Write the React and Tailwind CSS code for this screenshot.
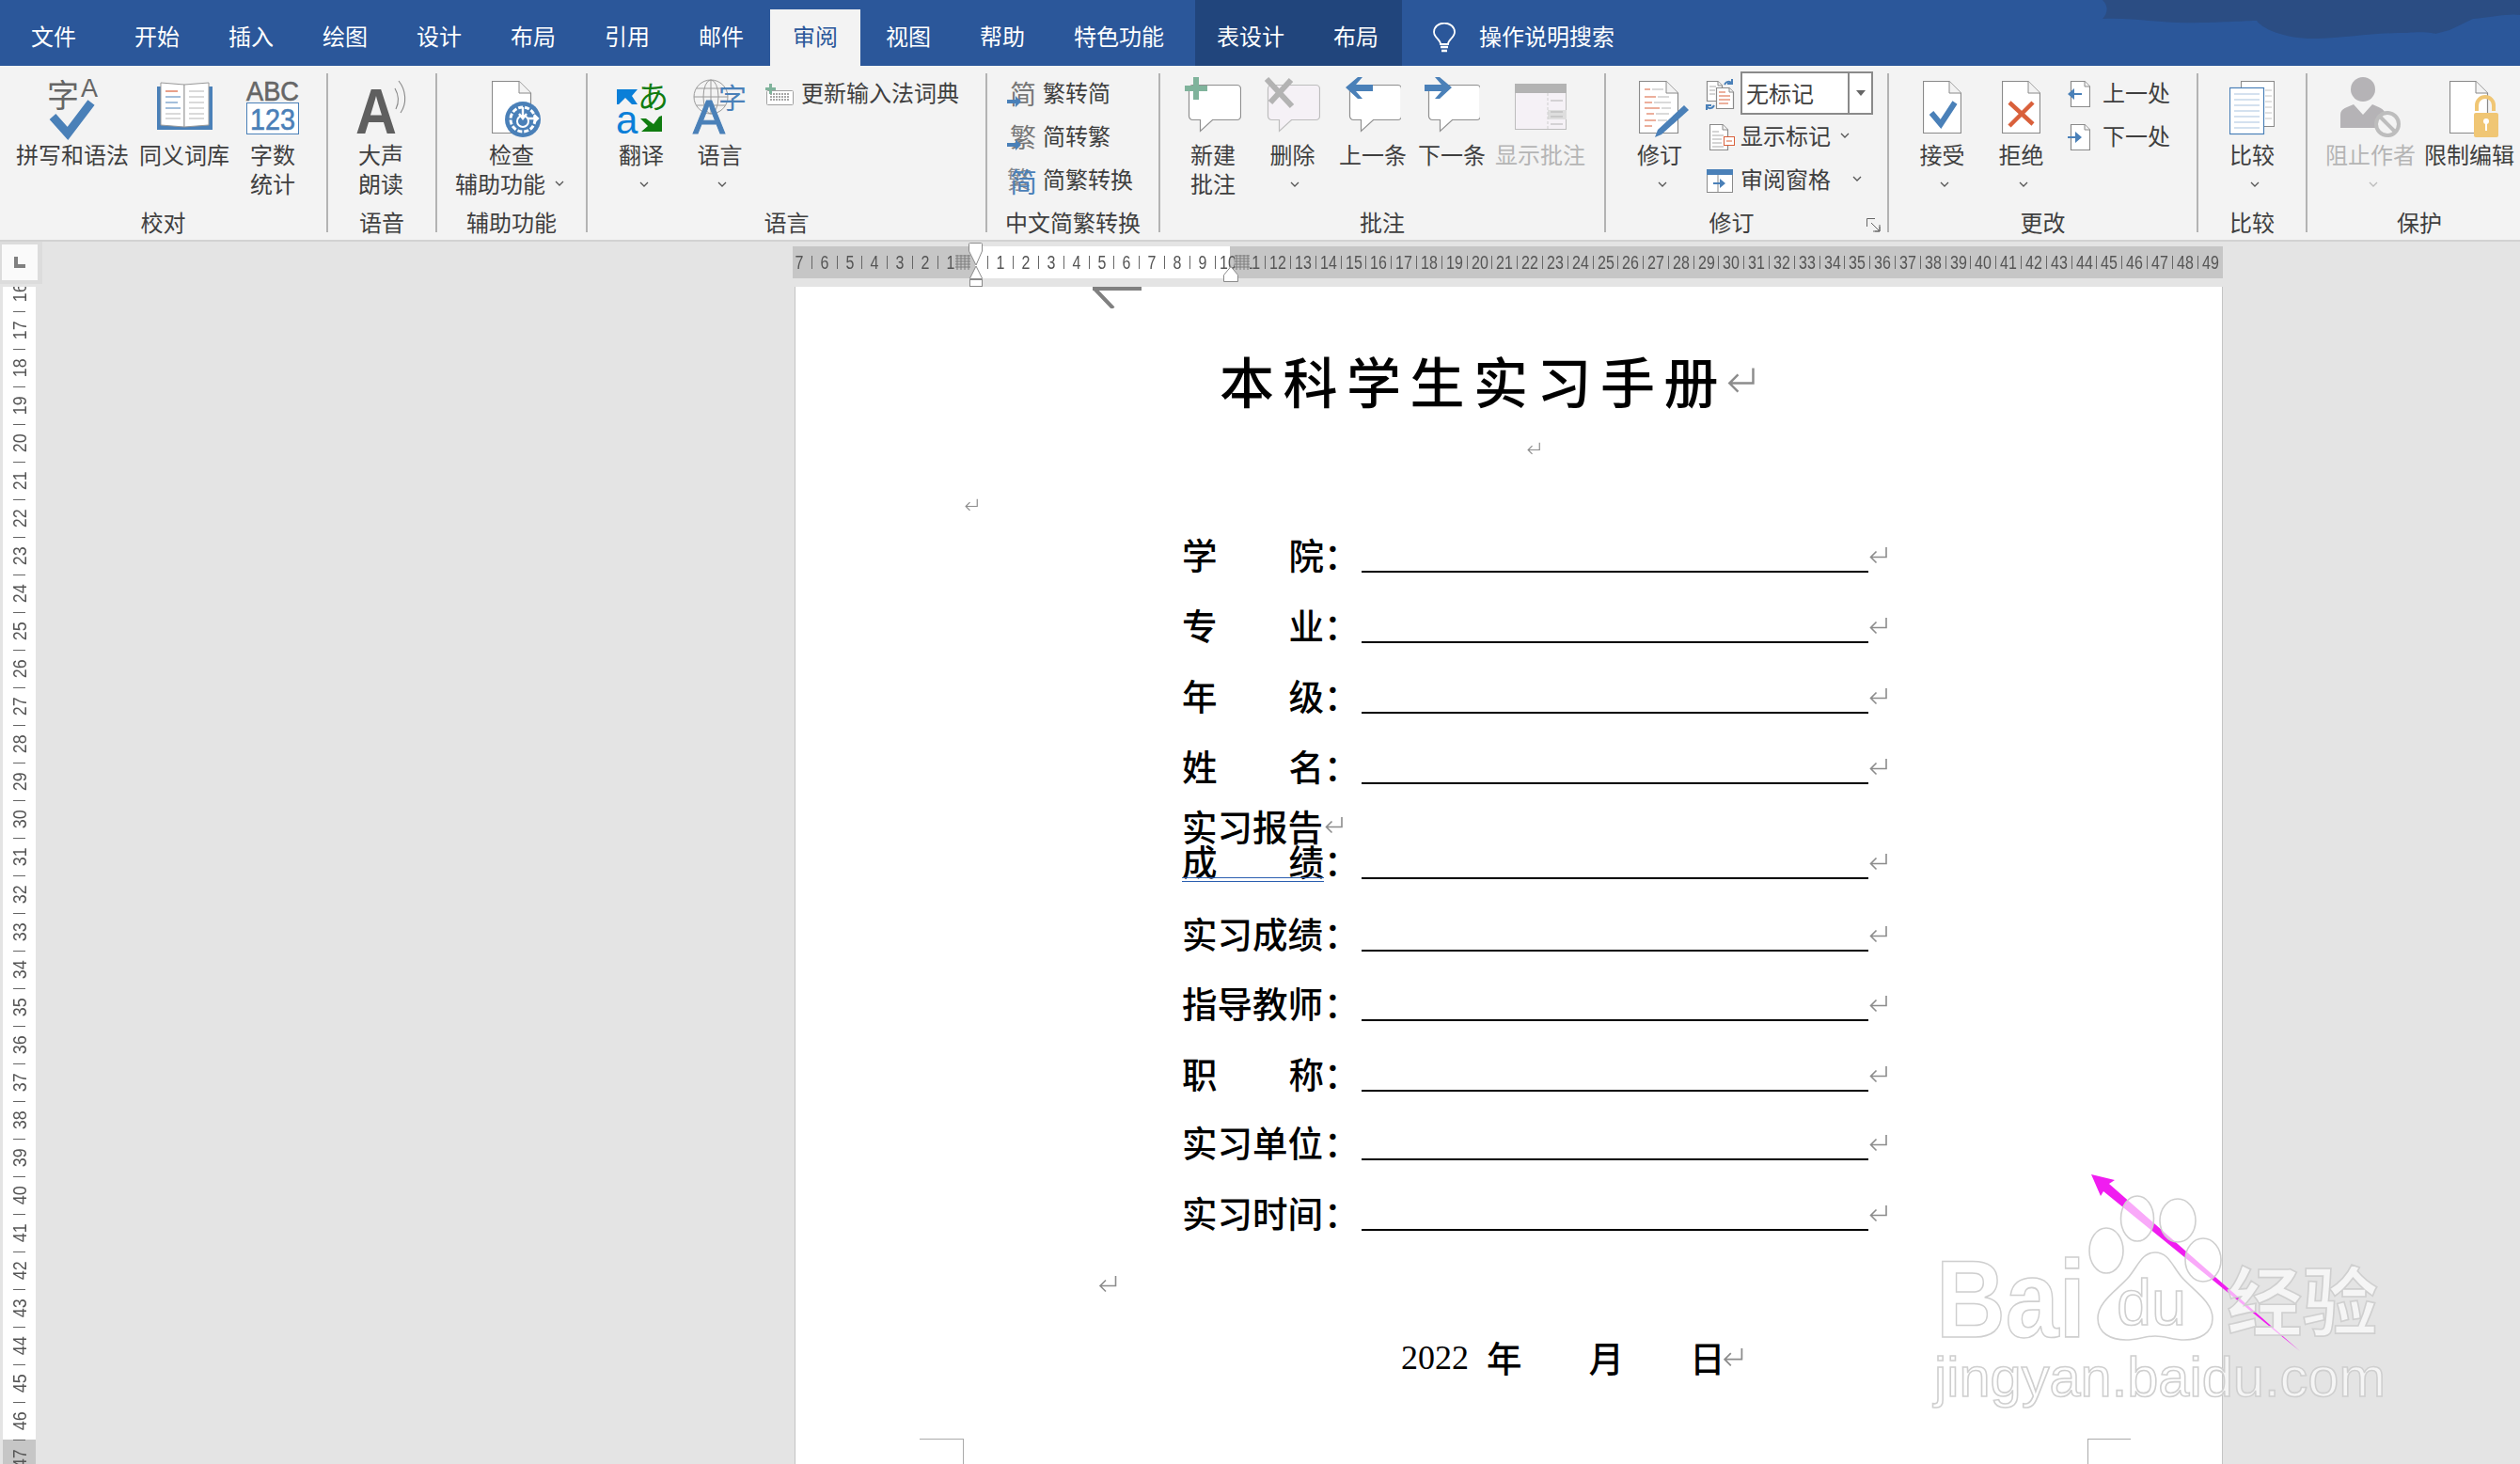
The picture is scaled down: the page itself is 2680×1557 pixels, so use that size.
const BLUE = '#4a80b8';

function Chevron({ className = '', color = '#555' }) {
  return (
    <svg width="10" height="6" viewBox="0 0 10 6" className={className}>
      <path d="M1 1l4 4 4-4" fill="none" stroke={color} strokeWidth="1.3" />
    </svg>
  );
}

function Ret({ className = 'w-[20px] h-[19px]' }) {
  return (
    <svg viewBox="0 0 20 19" className={`shrink-0 ${className}`}>
      <path d="M18.5 1v10.500H2.500M8 5.500l-6 6 6 6" fill="none" stroke="#8c8c8c" strokeWidth="1.6" />
    </svg>
  );
}

// page with a folded corner
function Doc({ x = 0, y = 0, w = 41, h = 56, f = 13 }) {
  return (
    <g>
      <path d={`M${x + 0.5} ${y + 0.5}H${x + w - f}L${x + w - 0.5} ${y + f}V${y + h - 0.5}H${x + 0.5}Z`} fill="#fff" stroke="#8a8a8a" strokeWidth="1.2" />
      <path d={`M${x + w - f} ${y + 0.5}V${y + f}H${x + w - 0.5}`} fill="#f3f3f3" stroke="#8a8a8a" strokeWidth="1" />
    </g>
  );
}

function Bubble({ x = 0, y = 8, fill = '#fff', stroke = '#8f8f8f' }) {
  return (
    <path
      d={`M${x + 4} ${y}H${x + 51}a4 4 0 0 1 4 4V${y + 33}a4 4 0 0 1-4 4H${x + 25}L${x + 12} ${y + 49}V${y + 37}H${x + 4}a4 4 0 0 1-4-4V${y + 4}a4 4 0 0 1 4-4Z`}
      transform="translate(0.5 0.5)"
      fill={fill}
      stroke={stroke}
      strokeWidth="1.2"
    />
  );
}

function SpellIcon() {
  return (
    <svg width="54" height="64" viewBox="0 0 54 64" className="overflow-visible">
      <text x="0" y="32" fontSize="34" fill="#666">字</text>
      <text x="36" y="21" fontSize="27" fill="#666" className="font-['Liberation_Sans',sans-serif]">A</text>
      <path d="M6 42l16 18 25-33" fill="none" stroke={BLUE} strokeWidth="9" />
    </svg>
  );
}

function BookIcon() {
  return (
    <svg width="59" height="64" viewBox="0 0 59 64">
      <rect x="0" y="10" width="59" height="46" fill={BLUE} />
      <path d="M4 6l25 2v45l-25-2Z" fill="#fff" stroke="#999" />
      <path d="M55 6l-26 2v45l26-2Z" fill="#fff" stroke="#999" />
      <path d="M9 15h13" stroke="#d9603b" strokeWidth="1.2" />
      <path d="M9 21h16M9 27h13M9 33h16" stroke={BLUE} strokeWidth="1.2" />
      <path d="M9 39h16M9 44h16M34 15h16M34 21h16M34 27h16M34 33h16M34 39h16M34 44h16" stroke="#b5b5b5" strokeWidth="1.2" />
    </svg>
  );
}

function AbcIcon() {
  return (
    <svg width="56" height="64" viewBox="0 0 56 64" className="overflow-visible">
      <text x="0" y="25" fontSize="29" fill="#666" stroke="#666" strokeWidth="0.6" textLength="56" lengthAdjust="spacingAndGlyphs" className="font-['Liberation_Sans',sans-serif]">ABC</text>
      <rect x="0.5" y="27.5" width="55" height="33" fill="#fff" stroke={BLUE} />
      <text x="4" y="56" fontSize="31" fill={BLUE} stroke={BLUE} strokeWidth="0.6" textLength="48" lengthAdjust="spacingAndGlyphs" className="font-['Liberation_Sans',sans-serif]">123</text>
    </svg>
  );
}

function ReadIcon() {
  return (
    <svg width="54" height="64" viewBox="0 0 54 64" className="overflow-visible">
      <text x="0" y="60" fontSize="68" fontWeight="700" fill="#5f5f5f" textLength="44" lengthAdjust="spacingAndGlyphs" className="font-['Liberation_Sans',sans-serif]">A</text>
      <path d="M42 12c4 7 5 14 1 22M46 4c8 10 9 24 2 34" fill="none" stroke="#888" strokeWidth="1.1" />
    </svg>
  );
}

function A11yIcon() {
  return (
    <svg width="52" height="64" viewBox="0 0 52 64">
      <Doc y={4} w={42} h={56} />
      <circle cx="33" cy="45" r="19" fill={BLUE} />
      <circle cx="33" cy="45" r="13" fill="none" stroke="#fff" strokeWidth="3" strokeDasharray="5 2" />
      <circle cx="33" cy="47" r="6" fill={BLUE} stroke="#fff" strokeWidth="2" />
      <path d="M33 32v12M29 39l4 5 4-5M38 44h11M45 40l4 4-4 4" fill="none" stroke="#fff" strokeWidth="2.4" />
    </svg>
  );
}

function TranslateIcon() {
  return (
    <svg width="52" height="64" viewBox="0 0 52 64" className="overflow-visible">
      <path d="M0 13H22L16 20 22 29H16L9 22 2 29H0Z" fill="#0a7fd8" />
      <text x="22" y="33" fontSize="33" fill="#107c10">あ</text>
      <text x="-1" y="60" fontSize="42" fill="#0a7fd8" className="font-['Liberation_Sans',sans-serif]">a</text>
      <path d="M48 41V58H26L33 52 25 44H31L39 50 45 42Z" fill="#107c10" />
    </svg>
  );
}

function LangIcon() {
  return (
    <svg width="57" height="64" viewBox="0 0 57 64" className="overflow-visible">
      <g fill="none" stroke="#9a9a9a" strokeWidth="1">
        <circle cx="19" cy="21" r="18" />
        <ellipse cx="19" cy="21" rx="8" ry="18" />
        <path d="M19 3v36M1 21h36M4 12h30M4 30h30" />
      </g>
      <text x="27" y="33" fontSize="30" fill={BLUE}>字</text>
      <text x="0" y="60" fontSize="50" fill={BLUE} stroke={BLUE} strokeWidth="1" textLength="34" lengthAdjust="spacingAndGlyphs" className="font-['Liberation_Sans',sans-serif]">A</text>
    </svg>
  );
}

function NewCommentIcon() {
  return (
    <svg width="60" height="64" viewBox="0 0 60 64">
      <Bubble x={4} />
      <path d="M9 0h6v9h9v6h-9v9H9v-9H0V9h9Z" fill="#7fb39b" />
    </svg>
  );
}

function DeleteIcon() {
  return (
    <svg width="59" height="64" viewBox="0 0 59 64">
      <Bubble x={3} fill="#f5f1f6" stroke="#bdbdbd" />
      <path d="M2 2l27 29M28 3L6 27" fill="none" stroke="#b3b3b3" strokeWidth="6" />
    </svg>
  );
}

function PrevIcon() {
  return (
    <svg width="59" height="64" viewBox="0 0 59 64">
      <Bubble x={4} />
      <path d="M0 11L13 0h5l-7 8h18v7H11l7 8h-5Z" fill={BLUE} />
    </svg>
  );
}

function NextIcon() {
  return (
    <svg width="59" height="64" viewBox="0 0 59 64">
      <Bubble x={4} />
      <path d="M29 11L16 0h-5l7 8H0v7h18l-7 8h5Z" fill={BLUE} />
    </svg>
  );
}

function ShowCommentsIcon() {
  return (
    <svg width="55" height="64" viewBox="0 0 55 64">
      <rect x="0.5" y="7.5" width="54" height="48" fill="#f5f1f6" stroke="#bdbdbd" />
      <rect x="0" y="7" width="55" height="10" fill="#b3b3b3" />
      <rect x="35" y="35" width="20" height="10" fill="#dedede" />
      <path d="M35 17v38" stroke="#cfcfcf" strokeDasharray="3 2" />
      <path d="M38 25h13M38 37h13M38 42h13M38 50h13" stroke="#b3b3b3" />
    </svg>
  );
}

function TrackIcon() {
  return (
    <svg width="53" height="64" viewBox="0 0 53 64">
      <Doc y={4} w={42} h={56} />
      <path d="M6 13h6M6 21h12M6 27h8M6 33h16M8 39h8M6 46h12M6 52h8" stroke="#d9603b" strokeWidth="1.2" />
      <path d="M14 13h12M20 21h12M16 27h18M24 33h10M18 39h14M20 46h10" stroke="#b5b5b5" strokeWidth="1.2" />
      <path d="M48 30l5 5-29 26-7 3 3-8Z" fill={BLUE} />
    </svg>
  );
}

function AcceptIcon() {
  return (
    <svg width="41" height="64" viewBox="0 0 41 64">
      <Doc y={4} />
      <path d="M9 38l10 12 15-23" fill="none" stroke={BLUE} strokeWidth="6" />
    </svg>
  );
}

function RejectIcon() {
  return (
    <svg width="41" height="64" viewBox="0 0 41 64">
      <Doc y={4} />
      <path d="M8 27l25 23M33 27L8 52" fill="none" stroke="#d9603b" strokeWidth="4.5" />
    </svg>
  );
}

function CompareIcon() {
  return (
    <svg width="48" height="64" viewBox="0 0 48 64">
      <rect x="12.5" y="4.5" width="35" height="48" fill="#fff" stroke="#8a8a8a" />
      <path d="M38 14h7M38 20h7M38 26h7M38 32h7M38 38h7M38 44h7" stroke="#c4c4c4" />
      <rect x="0.5" y="11.5" width="36" height="49" fill="#fff" stroke={BLUE} strokeWidth="1.2" />
      <path d="M5 18h27M5 24h27M5 30h27M5 36h27M5 42h27M5 48h27M5 54h27" stroke="#a9c3e0" strokeWidth="1.2" />
    </svg>
  );
}

function BlockIcon() {
  return (
    <svg width="64" height="64" viewBox="0 0 64 64">
      <ellipse cx="24" cy="13" rx="13" ry="13" fill="#b5b3b6" />
      <path d="M0 54V40c0-7 8-8 14-11l10 11 10-11c6 3 13 4 14 11v14Z" fill="#b5b3b6" />
      <circle cx="50" cy="50" r="12" fill="#f3f3f3" stroke="#bdbdbd" strokeWidth="4" />
      <path d="M42 42l16 16" stroke="#bdbdbd" strokeWidth="4" />
    </svg>
  );
}

function LockIcon() {
  return (
    <svg width="53" height="64" viewBox="0 0 53 64">
      <Doc y={4} />
      <path d="M32 36V30a9 9 0 0 1 18 0v6" fill="none" stroke="#f0c674" strokeWidth="4" transform="translate(-3 0)" />
      <rect x="26" y="38" width="26" height="26" rx="2" fill="#f0c674" />
      <circle cx="39" cy="47" r="3" fill="#fff" />
      <path d="M39 48v9" stroke="#fff" strokeWidth="2" />
    </svg>
  );
}

function KeyboardIcon() {
  return (
    <svg width="30" height="23" viewBox="0 0 30 23">
      <rect x="1.5" y="7.5" width="28" height="15" rx="1" fill="#fff" stroke="#a0a0a0" />
      <path d="M5 11h21M5 14h21M5 17h21" stroke="#8a8a8a" strokeWidth="1.4" strokeDasharray="2 1" />
      <path d="M4 0h3v4h4v3H7v4H4V7H0V4h4Z" fill="#7fb39b" />
    </svg>
  );
}

function ConvertIcon({ char }) {
  return (
    <svg width="31" height="30" viewBox="0 0 31 30" className="overflow-visible">
      <text x="3" y="26" fontSize="28" fill="#777">{char}</text>
      <path d="M0 21h9v-4l6 6-6 6v-4H0Z" fill={BLUE} />
    </svg>
  );
}

function SimpTradIcon() {
  return (
    <svg width="31" height="34" viewBox="0 0 31 34" className="overflow-visible">
      <text x="0" y="26" fontSize="26" fill="#8a8a8a">繁</text>
      <text x="3" y="30" fontSize="29" fill={BLUE}>简</text>
    </svg>
  );
}

function ReviewDocsIcon() {
  return (
    <svg width="32" height="33" viewBox="0 0 32 33">
      <Doc x={2} y={2} w={17} h={22} f={5} />
      <Doc x={12} y={9} w={19} h={23} f={5} />
      <path d="M15 14h7M15 18h12M15 22h12M15 26h10" stroke="#d9603b" />
      <path d="M5 8h7M5 12h6M5 16h6" stroke="#aaa" />
      <path d="M21 6c2-4 6-4 8-1M29 0v5h-5" fill="none" stroke={BLUE} strokeWidth="2" />
      <path d="M10 28c-2 4-6 4-8 1M2 33v-5h5" fill="none" stroke={BLUE} strokeWidth="2" />
    </svg>
  );
}

function MarkupIcon() {
  return (
    <svg width="27" height="28" viewBox="0 0 27 28">
      <Doc w={20} h={28} f={6} />
      <path d="M3 8h7M3 12h12M3 16h10M3 20h10M3 24h12" stroke="#aaa" />
      <rect x="15.5" y="13.5" width="11" height="9" fill="#fff" stroke="#d9603b" />
      <path d="M18 18h6" stroke="#d9603b" />
    </svg>
  );
}

function PaneIcon() {
  return (
    <svg width="28" height="25" viewBox="0 0 28 25">
      <rect x="0.5" y="0.5" width="27" height="24" fill="#fff" stroke="#8a8a8a" />
      <rect x="0" y="0" width="28" height="6" fill={BLUE} />
      <path d="M12 6v19" stroke="#8a8a8a" />
      <path d="M7 14h7v-4l6 5-6 5v-4H7Z" fill={BLUE} />
    </svg>
  );
}

function ChangeIcon({ next }) {
  return (
    <svg width="24" height="28" viewBox="0 0 24 28">
      <Doc x={3} w={21} h={28} f={6} />
      {next
        ? <path d="M0 13h8V8l7 6-7 6v-5H0Z" fill={BLUE} />
        : <path d="M15 13H7V8l-7 6 7 6v-5h8Z" fill={BLUE} />}
    </svg>
  );
}

function Btn({ className = '', icon, lines, chevron, disabled }) {
  const tone = disabled ? 'text-[#b5b5b5]' : '';
  return (
    <div className={`flex flex-col items-center shrink-0 ${tone} ${className}`}>
      <div className="h-[73px] flex items-end justify-center pb-[2px]">{icon}</div>
      {lines.map((l) => (
        <div key={l} className="leading-[31px] whitespace-nowrap">{l}</div>
      ))}
      {chevron && (
        <div className="h-[31px] pt-[2px] flex items-center pl-[5px]">
          <Chevron color={disabled ? '#bbb' : '#555'} />
        </div>
      )}
    </div>
  );
}

function SmallRow({ className = '', icon, slot = 'w-[38px]', label, tail }) {
  return (
    <div className={`flex items-center h-[46px] whitespace-nowrap ${className}`}>
      <div className={`shrink-0 flex items-center translate-y-[2px] ${slot}`}>{icon}</div>
      <span>{label}</span>
      {tail}
    </div>
  );
}

function Group({ className = '', label, labelClass = '', children }) {
  return (
    <div className={`shrink-0 flex flex-col ${className}`}>
      <div className="h-[151px] flex items-start pt-[5px]">{children}</div>
      <div className={`h-[34px] leading-[30px] text-center ${labelClass}`}>{label}</div>
    </div>
  );
}

function Divider() {
  return <div className="shrink-0 w-[2px] h-[169px] mt-[8px] bg-[#b3b3b3]" />;
}

function TitleBar() {
  return (
    <div className="relative h-[70px] bg-[#2b579a] flex items-end text-white text-[24px] overflow-hidden">
      <svg width="460" height="70" viewBox="2220 0 460 70" className="absolute right-0 top-0">
        <path d="M2236 0c8 8 4 16 0 20 34-2 64 6 104 4 20 0 50-2 60-2 5 8 30 20 65 19 35-1 55-6 95-6 20-2 30 1 30 1l15-4 25-12c20-2 40-6 50-4V0Z" fill="#2b4d83" />
      </svg>
      <div className="relative flex items-start h-[60px] pl-[7px]">
        <div className="px-[26px] mr-[10px] leading-[55px]">文件</div>
        {['开始', '插入', '绘图', '设计', '布局', '引用', '邮件'].map((t) => (
          <div key={t} className="px-[26px] leading-[55px]">{t}</div>
        ))}
        <div className="ml-[2px] mr-[1px] px-[24px] h-[60px] leading-[55px] bg-[#f3f3f3] text-[#2b579a]">审阅</div>
        {['视图', '帮助', '特色功能'].map((t) => (
          <div key={t} className="px-[26px] leading-[55px]">{t}</div>
        ))}
        <div className="ml-[7px] h-[70px] -mt-[10px] pt-[10px] bg-[#21457c] flex">
          <div className="pl-[23px] pr-[26px] leading-[55px]">表设计</div>
          <div className="pl-[26px] pr-[25px] leading-[55px]">布局</div>
        </div>
        <svg width="24" height="32" viewBox="0 0 24 32" className="ml-[33px] mt-[14px]">
          <path d="M8 23c0-5-7-7-7-13a11 9.500 0 0 1 22 0c0 6-7 8-7 13Z" fill="none" stroke="#fff" strokeWidth="1.8" />
          <path d="M8 26h8M9 30h6" stroke="#fff" strokeWidth="2.4" />
        </svg>
        <div className="ml-[25px] leading-[55px]">操作说明搜索</div>
      </div>
    </div>
  );
}

function Ribbon() {
  return (
    <div className="h-[187px] bg-[#f3f3f3] border-b-2 border-[#d2d2d2] flex text-[24px] text-[#3f3f3f] overflow-hidden">
      <Group className="w-[347px]" label="校对">
        <Btn className="ml-[17px] w-[120px]" icon={<SpellIcon />} lines={['拼写和语法']} />
        <Btn className="ml-[11px] w-[96px]" icon={<BookIcon />} lines={['同义词库']} />
        <Btn className="ml-[18px] w-[56px]" icon={<AbcIcon />} lines={['字数', '统计']} />
      </Group>
      <Divider />
      <Group className="w-[114px]" label="语音">
        <Btn className="ml-[32px] w-[48px]" icon={<ReadIcon />} lines={['大声', '朗读']} />
      </Group>
      <Divider />
      <Group className="w-[158px]" label="辅助功能">
        <div className="ml-[19px] w-[120px] flex flex-col">
          <div className="h-[73px] flex items-end pb-[2px] pl-[39px]"><A11yIcon /></div>
          <div className="leading-[31px] text-center">检查</div>
          <div className="leading-[31px] flex items-center">辅助功能<Chevron className="ml-[10px]" /></div>
        </div>
      </Group>
      <Divider />
      <Group className="w-[423px]" label="语言">
        <Btn className="ml-[31px] w-[52px]" icon={<TranslateIcon />} lines={['翻译']} chevron />
        <Btn className="ml-[29px] w-[57px]" icon={<LangIcon />} lines={['语言']} chevron />
        <SmallRow className="ml-[20px]" slot="w-[38px]" icon={<KeyboardIcon />} label="更新输入法词典" />
      </Group>
      <Divider />
      <Group className="w-[182px]" label="中文简繁转换">
        <div className="ml-[21px] flex flex-col">
          <SmallRow icon={<ConvertIcon char="简" />} label="繁转简" />
          <SmallRow icon={<ConvertIcon char="繁" />} label="简转繁" />
          <SmallRow icon={<SimpTradIcon />} label="简繁转换" />
        </div>
      </Group>
      <Divider />
      <Group className="w-[472px]" label="批注">
        <Btn className="ml-[26px] w-[60px]" icon={<NewCommentIcon />} lines={['新建', '批注']} />
        <Btn className="ml-[25px] w-[59px]" icon={<DeleteIcon />} lines={['删除']} chevron />
        <Btn className="ml-[20px] w-[72px]" icon={<PrevIcon />} lines={['上一条']} />
        <Btn className="ml-[12px] w-[72px]" icon={<NextIcon />} lines={['下一条']} />
        <Btn className="ml-[10px] w-[96px]" icon={<ShowCommentsIcon />} lines={['显示批注']} disabled />
      </Group>
      <Divider />
      <Group className="relative w-[299px]" label="修订" labelClass="pr-[32px]">
        <Btn className="ml-[33px] w-[48px]" icon={<span className="ml-[8px] block"><TrackIcon /></span>} lines={['修订']} chevron />
        <div className="ml-[24px] flex flex-col">
          <div className="flex items-center h-[46px] translate-y-[1px]">
            <div className="w-[38px] translate-y-[1px]"><ReviewDocsIcon /></div>
            <div className="w-[141px] h-[46px] border-2 border-[#8a8a8a] bg-white flex items-center">
              <span className="pl-[4px] w-[112px]">无标记</span>
              <div className="w-[2px] h-full bg-[#8a8a8a]" />
              <svg width="10" height="6" viewBox="0 0 10 6" className="ml-[7px]"><path d="M0 0h10L5 6Z" fill="#666" /></svg>
            </div>
          </div>
          <SmallRow slot="w-[38px] pl-[5px]" icon={<MarkupIcon />} label="显示标记" tail={<Chevron className="ml-[10px]" />} />
          <SmallRow slot="w-[38px] pl-[2px]" icon={<PaneIcon />} label="审阅窗格" tail={<Chevron className="ml-[23px]" />} />
        </div>
        <svg width="15" height="15" viewBox="0 0 15 15" className="absolute right-[7px] top-[162px]">
          <path d="M14 7v7H7M.5 9V.5H9M5 5l9 9M14 9v5H9" fill="none" stroke="#666" />
        </svg>
      </Group>
      <Divider />
      <Group className="w-[327px]" label="更改">
        <Btn className="ml-[33px] w-[47px]" icon={<AcceptIcon />} lines={['接受']} chevron />
        <Btn className="ml-[37px] w-[47px]" icon={<RejectIcon />} lines={['拒绝']} chevron />
        <div className="ml-[26px] flex flex-col">
          <SmallRow slot="w-[37px]" icon={<ChangeIcon />} label="上一处" />
          <SmallRow slot="w-[37px]" icon={<ChangeIcon next />} label="下一处" />
        </div>
      </Group>
      <Divider />
      <Group className="w-[114px]" label="比较">
        <Btn className="ml-[33px] w-[48px]" icon={<CompareIcon />} lines={['比较']} chevron />
      </Group>
      <Divider />
      <Group className="w-[238px]" label="保护">
        <Btn className="ml-[19px] w-[96px]" icon={<BlockIcon />} lines={['阻止作者']} chevron disabled />
        <Btn className="ml-[9px] w-[96px]" icon={<span className="ml-[10px] block"><LockIcon /></span>} lines={['限制编辑']} />
      </Group>
    </div>
  );
}

const hNums = [7, 6, 5, 4, 3, 2, 1, 0, ...Array.from({ length: 49 }, (_, i) => i + 1)];
const vNums = Array.from({ length: 32 }, (_, i) => i + 16);

function MarginGrid({ className }) {
  return (
    <svg width="16" height="16" viewBox="0 0 16 16" className={className}>
      <rect width="16" height="16" fill="#c6c6c6" />
      <path d="M0 1h16M0 4h16M0 7h16M0 10h16M0 13h16M2 0v16M6 0v16M10 0v16M14 0v16" stroke="#7d7d7d" />
    </svg>
  );
}

function HRuler() {
  return (
    <div className="relative h-[48px] pt-[5px] w-[1521px]">
      <div className="relative h-[34px] flex overflow-hidden">
        <div className="w-[194px] bg-[#c6c6c6]" />
        <div className="w-[271px] bg-white" />
        <div className="flex-1 bg-[#c6c6c6]" />
        <div className="absolute inset-0 flex -ml-[7px] text-[20px] text-[#555] font-['Liberation_Sans',sans-serif]">
          {hNums.map((n, i) => (
            <div key={i} className="shrink-0 w-[26.8px] flex items-center">
              {n > 0 && <div className="shrink-0 w-[1px] h-[14px] bg-[#666]" />}
              <span className="flex-1 text-center whitespace-nowrap scale-x-[0.8]">{n > 0 ? n : ''}</span>
            </div>
          ))}
        </div>
      </div>
      <MarginGrid className="absolute left-[173px] top-[14px]" />
      <MarginGrid className="absolute left-[470px] top-[14px]" />
      <svg width="18" height="48" viewBox="0 0 18 48" className="absolute left-[186px] top-0">
        <path d="M1.500 2.500a1 1 0 0 1 1-1h12a1 1 0 0 1 1 1V10L9 25 1.500 10Z" fill="#fff" stroke="#8a8a8a" />
        <path d="M9 26l6.500 13v.5h-13V39Z" fill="#fff" stroke="#8a8a8a" />
        <rect x="2.500" y="40.500" width="13" height="7" fill="#fff" stroke="#8a8a8a" />
      </svg>
      <svg width="18" height="18" viewBox="0 0 18 18" className="absolute left-[457px] top-[26px]">
        <path d="M9 .5l7.500 9v7h-15v-7Z" fill="#fff" stroke="#8a8a8a" />
      </svg>
    </div>
  );
}

function VRuler() {
  return (
    <div className="mt-[3px] ml-[3px] w-[35px] h-[1252px] bg-white overflow-hidden text-[21px] text-[#555] font-['Liberation_Sans',sans-serif]">
      <div className="-mt-[14px]">
        {vNums.map((n) => (
          <div key={n} className={`h-[40px] flex flex-col items-center ${n === 47 ? 'bg-[#c6c6c6]' : ''}`}>
            <div className="shrink-0 w-[13px] h-[1px] bg-[#666]" />
            <span className="flex-1 flex items-center justify-center [writing-mode:vertical-rl] rotate-180 scale-y-[0.85]">{n}</span>
          </div>
        ))}
      </div>
    </div>
  );
}

const rows = [
  { a: '学', b: '院', h: 'h-[65px]' },
  { a: '专', b: '业', h: 'h-[74.5px]' },
  { a: '年', b: '级', h: 'h-[75px]' },
  { a: '姓', b: '名', h: 'h-[75px]' },
  { a: '成', b: '绩', h: 'h-[101px]', report: true },
  { a: '实习成绩', h: 'h-[77px]' },
  { a: '指导教师', h: 'h-[74px]' },
  { a: '职', b: '称', h: 'h-[75px]' },
  { a: '实习单位', h: 'h-[73px]' },
  { a: '实习时间', h: 'h-[75px]' },
];

function FormRow({ a, b, h, report }) {
  return (
    <div className={`flex items-end ${h}`}>
      <div className={`w-[191px] shrink-0 ${report ? '-mb-[3px]' : ''}`}>
        {report && (
          <div className="flex items-center h-[33px] mb-[3px] leading-[33px] font-medium">
            实习报告<Ret className="w-[21px] h-[19px] ml-[1px]" />
          </div>
        )}
        <div className="flex items-baseline font-medium text-[37.500px]">
          <div className="w-[151px] flex flex-col">
            <div className={`flex justify-between ${report ? 'leading-[36px]' : 'leading-[40px]'}`}>
              <span>{a}</span>
              {b && <span>{b}</span>}
            </div>
            {report && <div className="h-[5px] border-y border-[#2b5fb0]" />}
          </div>
          <span className="leading-[30px]">：</span>
        </div>
      </div>
      <div className="w-[539px] shrink-0 h-[2px] bg-black" />
      <Ret className="w-[21px] h-[19px] mb-[9px]" />
    </div>
  );
}

function Page() {
  return (
    <div className="relative ml-[2px] w-[1519px] h-[1252px] bg-white border-x border-[#c4c4c4] text-black text-[37.500px]">
      <svg width="52" height="23" viewBox="0 0 52 23" className="absolute left-[316px] top-0">
        <path d="M0 2h52M2 2l20 21" fill="none" stroke="#808080" strokeWidth="4" />
      </svg>
      <div className="pt-[62px] pl-[451px] flex items-center h-[135px]">
        <div className="text-[58px] leading-[68px] tracking-[9.500px] font-medium whitespace-nowrap">本科学生实习手册</div>
        <Ret className="w-[33px] h-[29px] -ml-[2px] mt-[2px]" />
      </div>
      <div className="mt-[30px] ml-[777px]"><Ret className="w-[16px] h-[14px]" /></div>
      <div className="mt-[46px] ml-[179px]"><Ret className="w-[16px] h-[14px]" /></div>
      <div className="ml-[411px] flex flex-col">
        {rows.map((r) => <FormRow key={r.a} {...r} />)}
      </div>
      <div className="mt-[47px] ml-[321px]"><Ret className="w-[22px] h-[19px]" /></div>
      <div className="mt-[49px] ml-[644px] flex items-center h-[40px] font-medium">
        <span className="font-['Liberation_Serif',serif] font-normal text-[36px]">2022</span>
        <span className="ml-[19px]">年</span>
        <span className="ml-[71px]">月</span>
        <span className="ml-[70px]">日</span>
        <Ret className="w-[24px] h-[21px] -ml-[4px]" />
      </div>
      <div className="absolute left-[132px] top-[1225px] w-[47px] h-[40px] border-t border-r border-[#aaa]" />
      <div className="absolute left-[1374px] top-[1225px] w-[46px] h-[40px] border-t border-l border-[#aaa]" />
    </div>
  );
}

function Watermark() {
  const fill = 'rgba(255,255,255,0.62)';
  const stroke = '#cfcfcf';
  return (
    <svg viewBox="0 0 2680 1557" className="absolute inset-0 w-[2680px] h-[1557px] pointer-events-none">
      <path d="M2224 1249L2249 1255 2243 1259 2446 1437 2237 1267 2234 1272Z" fill="#f01df0" />
      <g fill={fill} stroke={stroke} strokeWidth="1.600" className="blur-[0.5px]">
        <ellipse cx="2240" cy="1330" rx="18" ry="24" />
        <ellipse cx="2273" cy="1296" rx="17.500" ry="24" />
        <ellipse cx="2316" cy="1298" rx="19" ry="23" />
        <ellipse cx="2343" cy="1340" rx="19" ry="23" />
        <path d="M2292 1332c-14 0-18 14-28 26-12 14-33 26-33 44 0 16 14 23 30 23 12 0 20-4 31-4s19 4 31 4c16 0 30-7 30-23 0-18-21-30-33-44-10-12-14-26-28-26Z" />
        <text x="2059" y="1422" fontSize="116" fontWeight="700" textLength="159" lengthAdjust="spacingAndGlyphs" className="font-['Liberation_Sans',sans-serif]">Bai</text>
        <text x="2251" y="1409" fontSize="68" textLength="74" lengthAdjust="spacingAndGlyphs" className="font-['Liberation_Sans',sans-serif]">du</text>
        <text x="2368" y="1414" fontSize="80" fontWeight="700" textLength="161" lengthAdjust="spacingAndGlyphs">经验</text>
        <text x="2057" y="1485" fontSize="60" textLength="480" lengthAdjust="spacingAndGlyphs" className="font-['Liberation_Sans',sans-serif]">jingyan.baidu.com</text>
      </g>
    </svg>
  );
}

export default function App() {
  return (
    <div className="relative w-[2680px] h-[1557px] overflow-hidden bg-[#e4e4e4] font-['Noto_Sans_CJK_SC',sans-serif]">
      <TitleBar />
      <Ribbon />
      <div className="flex h-[1300px]">
        <div className="w-[45px] shrink-0">
          <div className="w-[45px] h-[45px] bg-[#dcdcdc] pt-[3px] pl-[2px]">
            <div className="w-[38px] h-[38px] bg-[#fafafa] flex items-center justify-center">
              <svg width="12" height="12" viewBox="0 0 12 12"><path d="M0 0h4v8h8v4H0Z" fill="#808080" /></svg>
            </div>
          </div>
          <VRuler />
        </div>
        <div className="ml-[798px] w-[1521px] shrink-0">
          <HRuler />
          <Page />
        </div>
      </div>
      <Watermark />
    </div>
  );
}
